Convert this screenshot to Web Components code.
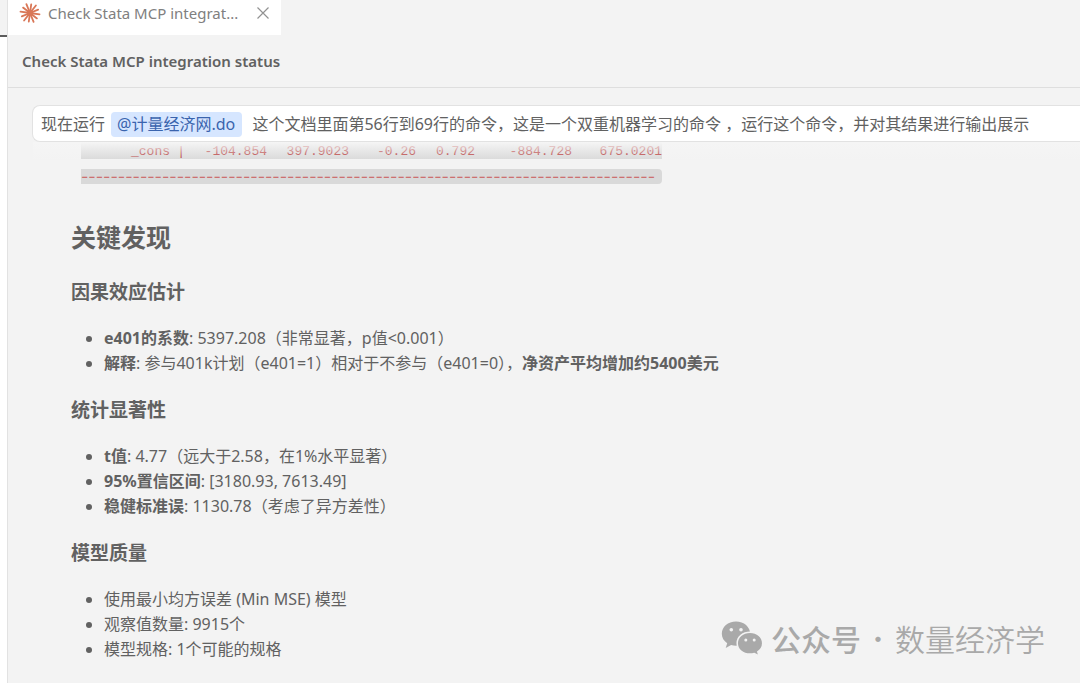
<!DOCTYPE html>
<html lang="zh-CN">
<head>
<meta charset="utf-8">
<title>Check Stata MCP integration status</title>
<style>
  html, body { height: 100%; }
  body { margin: 0; background: #f3f3f3; color: #616161; overflow: hidden;
    font: 16px/25px "Noto Sans", "Noto Sans CJK SC", sans-serif; }
</style>
</head>
<body>
<chat-window></chat-window>
<script>
const define = (name, html) => customElements.define(name, class extends HTMLElement {
  constructor() {
    super();
    const t = document.createElement('template');
    t.innerHTML = html;
    this.attachShadow({ mode: 'open' }).append(t.content.cloneNode(true));
  }
});

const rays = Array.from({ length: 12 }, (_, i) => {
  const a = (i * 30 + 8) * Math.PI / 180, r = i % 2 ? 8.8 : 9.6;
  return `<path d="M11 11L${(11 + r * Math.cos(a)).toFixed(2)} ${(11 + r * Math.sin(a)).toFixed(2)}"/>`;
}).join('');

define('editor-tab', `
  <style>
    :host { display: flex; align-items: center; box-sizing: border-box; width: 273px; height: 35px; padding: 0 10px 10px 11px; background: #fff; color: #808080; }
    .label { flex: 1; margin-left: 7px; white-space: nowrap; font-size: 15px; line-height: 24px; }
    button { border: 0; padding: 0; background: none; width: 16px; height: 16px; display: grid; place-items: center; }
    svg { display: block; }
  </style>
  <svg width="22" height="22" viewBox="0 0 22 22" stroke="#d97757" stroke-width="1.8" stroke-linecap="round" aria-hidden="true">${rays}<circle cx="11" cy="11" r="3.2" fill="#d97757" stroke="none"/></svg>
  <span class="label"><slot></slot></span>
  <button aria-label="Close"><svg width="14" height="14" viewBox="0 0 14 14" stroke="#929292" stroke-width="1.2"><path d="M1.5 1.5l11 11M12.5 1.5l-11 11"/></svg></button>
`);

define('side-rail', `
  <style>
    :host { display: flex; flex-direction: column; box-sizing: border-box; width: 8px; border-right: 1px solid #e2e2e2; background: #fff; }
    div { height: 35px; background: #f3f3f3; border-bottom: 2px solid #5c5c5c; }
  </style><div></div>
`);

define('session-title', `
  <style>
    :host { display: block; border-bottom: 1px solid #dedede; padding: 14px; }
    h1 { margin: 0; font-size: 15px; font-weight: 600; line-height: 24px; }
  </style><h1><slot></slot></h1>
`);

define('file-mention', `
  <style>
    :host { display: inline-block; margin: 0 6px; }
    a { display: block; padding: 0 7px 0 6px; border-radius: 4px; background: #d6e6ff; color: #3a64ae; text-decoration: none; }
  </style><a href="#"><slot></slot></a>
`);

define('user-message', `
  <style>
    :host { display: block; box-sizing: border-box; margin: 17px 0 0 24px; padding: 6px 8px 4px; height: 37px; background: #fff; border: 1px solid #e2e2e2; border-right: 0; border-radius: 8px 0 0 8px; white-space: nowrap; }
  </style><slot></slot>
`);

define('stata-output', `
  <style>
    :host { display: block; position: relative; padding-left: 73px; font: 13px/15px "Liberation Mono", monospace; color: #b02e2e; }
    .row, .rule { width: 581px; background: #d9d9d9; }
    table { border-collapse: collapse; table-layout: fixed; width: 100%; }
    td { padding: 3px 0 0; height: 14px; line-height: 14px; text-align: right; white-space: nowrap; }
    .rule { margin-top: 10px; height: 15px; border-radius: 0 4px 4px 0; white-space: nowrap; font: 16px/15px Inter, sans-serif; color: #cc7070; }
    .fade { position: absolute; inset: 0 0 auto 25px; height: 18px; background: linear-gradient(#f5f5f5, #f5f5f500); }
  </style>
  <div class="row"><table>
    <colgroup><col style="width:89px"><col style="width:15px"><col style="width:82px"><col style="width:82px"><col style="width:67px"><col style="width:59px"><col style="width:97px"><col></colgroup>
    <tr><td>_cons</td><td>|</td><td>-104.854</td><td>397.9023</td><td>-0.26</td><td>0.792</td><td>-884.728</td><td>675.0201</td></tr>
  </table></div>
  <div class="rule">${'-'.repeat(78)}</div>
  <div class="fade"></div>
`);

define('finding-group', `
  <style>
    :host { display: block; }
    h3 { margin: 0 0 22px; font-size: 19px; line-height: 24px; font-weight: 700; }
    ul { margin: 0 0 22px; padding-left: 33px; }
  </style>
  <h3><slot name="title"></slot></h3>
  <ul><slot></slot></ul>
`);

define('finding-item', `
  <style>:host { display: block; } li { white-space: nowrap; }</style>
  <li><slot></slot></li>
`);

define('key-findings', `
  <style>
    :host { display: block; margin: 37px 16px 0 63px; }
    h2 { margin: 0 0 27px; font-size: 25px; line-height: 32px; font-weight: 700; }
  </style>
  <h2>关键发现</h2>
  <finding-group><span slot="title">因果效应估计</span>
    <finding-item><b>e401的系数</b>: 5397.208（非常显著，p值&lt;0.001）</finding-item>
    <finding-item><b>解释</b>: 参与401k计划（e401=1）相对于不参与（e401=0），<b>净资产平均增加约5400美元</b></finding-item>
  </finding-group>
  <finding-group><span slot="title">统计显著性</span>
    <finding-item><b>t值</b>: 4.77（远大于2.58，在1%水平显著）</finding-item>
    <finding-item><b>95%置信区间</b>: [3180.93, 7613.49]</finding-item>
    <finding-item><b>稳健标准误</b>: 1130.78（考虑了异方差性）</finding-item>
  </finding-group>
  <finding-group><span slot="title">模型质量</span>
    <finding-item>使用最小均方误差 (Min MSE) 模型</finding-item>
    <finding-item>观察值数量: 9915个</finding-item>
    <finding-item>模型规格: 1个可能的规格</finding-item>
  </finding-group>
`);

define('account-mark', `
  <style>
    :host { position: absolute; right: 35px; bottom: 24px; display: flex; align-items: center; color: #a9a9a9; font: 30px/42px "Noto Sans CJK SC", sans-serif; white-space: nowrap; }
    svg { margin-right: 8px; }
    .account { font-weight: 500; }
    .dot { width: 34px; text-align: center; font-size: 25px; }
    .name { font-weight: 350; }
  </style>
  <svg width="42" height="36" viewBox="0 0 42 35" aria-hidden="true">
    <path fill="#a9a9a9" d="M15 1C7 1 .8 6.400.8 13.200c0 4 2.100 7.200 5.400 9.500L4.700 27.500l5.400-2.900c1.600.4 3.200.7 4.900.7 8 0 14.200-5.400 14.200-12.100S23 1 15 1z"/>
    <path fill="#a9a9a9" stroke="#f3f3f3" stroke-width="1.500" d="M29 11.800c-7.200 0-12.800 4.700-12.800 10.900S21.800 33.600 29 33.600c1.500 0 3-.2 4.300-.6l4.800 2.400-1.300-4.100c2.900-2 4.900-5.100 4.900-8.600 0-6.200-5.500-10.900-12.700-10.900z"/>
    <g fill="#f3f3f3"><circle cx="10.300" cy="9.300" r="1.800"/><circle cx="20" cy="9.300" r="1.800"/><circle cx="24.800" cy="19.500" r="1.500"/><circle cx="33.200" cy="19.500" r="1.500"/></g>
  </svg>
  <span class="account">公众号</span><span class="dot">·</span><span class="name">数量经济学</span>
`);

define('chat-window', `
  <style>
    :host { display: grid; grid-template-columns: auto 1fr; height: 100%; position: relative; overflow: hidden; }
    main { min-width: 0; }
  </style>
  <side-rail></side-rail>
  <main>
    <editor-tab>Check Stata MCP integrat...</editor-tab>
    <session-title>Check Stata MCP integration status</session-title>
    <user-message>现在运行<file-mention>@计量经济网.do</file-mention> 这个文档里面第56行到69行的命令，这是一个双重机器学习的命令 ，运行这个命令，并对其结果进行输出展示</user-message>
    <stata-output></stata-output>
    <key-findings></key-findings>
  </main>
  <account-mark></account-mark>
`);
</script>
</body>
</html>
